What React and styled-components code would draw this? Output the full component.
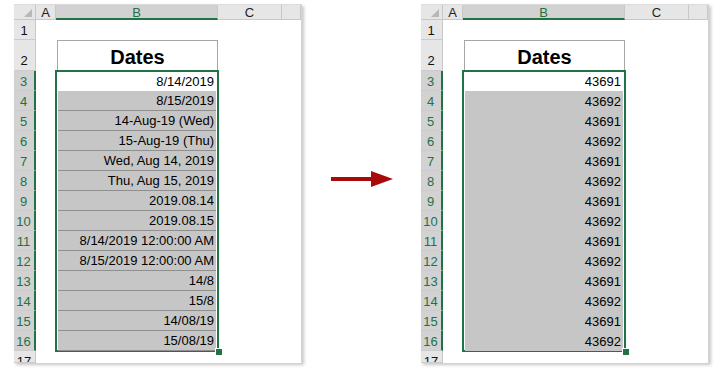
import React from "react";
import styled, { createGlobalStyle } from "styled-components";

const GlobalStyle = createGlobalStyle`
  html, body {
    margin: 0;
    background: #fff;
  }
  body {
    font-family: "Liberation Sans", Arial, sans-serif;
  }
`;

const GREEN = "#217346";

const before = [
  "8/14/2019",
  "8/15/2019",
  "14-Aug-19 (Wed)",
  "15-Aug-19 (Thu)",
  "Wed, Aug 14, 2019",
  "Thu, Aug 15, 2019",
  "2019.08.14",
  "2019.08.15",
  "8/14/2019 12:00:00 AM",
  "8/15/2019 12:00:00 AM",
  "14/8",
  "15/8",
  "14/08/19",
  "15/08/19",
];

const after = before.map((_, i) => (i % 2 === 0 ? "43691" : "43692"));

const Page = styled.div`
  display: flex;
  align-items: flex-start;
  padding: 4px 0 0 14px;
  height: 368px;
  box-sizing: border-box;
`;

const Sheet = styled.div`
  display: grid;
  grid-template-columns: 22px 20px 162px 64px 19px;
  grid-template-rows: 15px 20px 31px repeat(14, 20px) 12px;
  width: 287px;
  background: #fff;
  border-top: 1px solid #dcdcdc;
  border-right: 1px solid #d4d4d4;
  overflow: hidden;
  box-shadow: 2px 2px 3px rgba(0, 0, 0, 0.22);
  font-size: 13px;
  color: #000;
`;

const Corner = styled.div`
  grid-column: 1;
  grid-row: 1;
  position: relative;
  background: #e6e6e6;
  border-right: 1px solid #c8c8c8;
  border-bottom: 1px solid #c8c8c8;
  box-sizing: border-box;

  &::after {
    content: "";
    position: absolute;
    right: 3px;
    bottom: 2px;
    border-left: 8px solid transparent;
    border-bottom: 8px solid #b8b8b8;
  }
`;

const ColHead = styled.div`
  grid-row: 1;
  display: flex;
  align-items: center;
  justify-content: center;
  background: ${(p) => (p.$active ? "#d2d2d2" : "#e6e6e6")};
  color: ${(p) => (p.$active ? GREEN : "#222")};
  border-right: 1px solid #c8c8c8;
  border-bottom: ${(p) => (p.$active ? `2px solid ${GREEN}` : "1px solid #c8c8c8")};
  box-sizing: border-box;
  font-size: 13px;
  line-height: 1;
  padding-top: ${(p) => (p.$active ? "1px" : "0")};
`;

const RowHead = styled.div`
  grid-column: 1;
  display: flex;
  align-items: ${(p) => (p.$tall ? "flex-end" : "flex-start")};
  justify-content: center;
  padding: ${(p) => (p.$tall ? "0 1px 2px 0" : "3px 1px 0 0")};
  overflow: hidden;
  background: ${(p) => (p.$active ? "#d2d2d2" : "#e6e6e6")};
  color: ${(p) => (p.$active ? GREEN : "#111")};
  border-right: ${(p) => (p.$active ? `2px solid ${GREEN}` : "1px solid #c8c8c8")};
  border-bottom: 1px solid #cbcbcb;
  box-sizing: border-box;
  font-size: 13px;
  line-height: 15px;
`;

const Title = styled.div`
  grid-column: 3;
  grid-row: 3;
  margin-left: 1px;
  display: flex;
  align-items: flex-end;
  justify-content: center;
  border: 1px solid #a6a6a6;
  border-bottom: none;
  box-sizing: border-box;
  font-size: 20px;
  font-weight: bold;
  line-height: 24px;
  padding-bottom: 2px;
`;

const Selection = styled.div`
  grid-column: 3;
  grid-row: 4 / span 14;
  margin: -1px;
  position: relative;
  display: flex;
  flex-direction: column;
  border: 2px solid ${GREEN};
  padding: 0 1px 1px 1px;
  box-sizing: border-box;
  background: #fff;
`;

const Handle = styled.div`
  position: absolute;
  right: -5px;
  bottom: -5px;
  width: 6px;
  height: 6px;
  background: ${GREEN};
  border: 1px solid #fff;
  border-right: none;
  border-bottom: none;
`;

const Cell = styled.div`
  flex: 0 0 ${(p) => (p.$first ? "19px" : "20px")};
  display: flex;
  align-items: flex-end;
  justify-content: flex-end;
  padding: 0 2px 2px 0;
  box-sizing: border-box;
  background: ${(p) => (p.$first ? "#fff" : "#c6c6c6")};
  border-bottom: ${(p) => (p.$lined && !p.$first ? "1px solid #8f8f8f" : "none")};
  font-size: 13px;
  line-height: 15px;
  white-space: nowrap;

  &:last-of-type {
    flex-basis: 18px;
    border-bottom: none;
  }
`;

const ArrowBox = styled.div`
  width: 62px;
  margin: 165px 28px 0 29px;
  line-height: 0;
`;

function Spreadsheet({ values, lined }) {
  const rows = Array.from({ length: 17 }, (_, i) => i + 1);
  return (
    <Sheet>
      <Corner />
      <ColHead style={{ gridColumn: 2 }}>A</ColHead>
      <ColHead style={{ gridColumn: 3 }} $active>
        B
      </ColHead>
      <ColHead style={{ gridColumn: 4 }}>C</ColHead>
      <ColHead style={{ gridColumn: 5 }} />
      {rows.map((r) => (
        <RowHead
          key={r}
          style={{ gridRow: r + 1 }}
          $active={r >= 3 && r <= 16}
          $tall={r === 2}
        >
          {r}
        </RowHead>
      ))}
      <Title>Dates</Title>
      <Selection>
        {values.map((v, i) => (
          <Cell key={i} $first={i === 0} $lined={lined}>
            {v}
          </Cell>
        ))}
        <Handle />
      </Selection>
    </Sheet>
  );
}

function Arrow() {
  return (
    <svg width="62" height="20" viewBox="0 0 62 20">
      <rect x="0" y="8" width="42" height="4" fill="#a80a0a" />
      <polygon points="40,2 62,10 40,18" fill="#a80a0a" />
    </svg>
  );
}

export default function App() {
  return (
    <>
      <GlobalStyle />
      <Page>
        <Spreadsheet values={before} lined />
        <ArrowBox>
          <Arrow />
        </ArrowBox>
        <Spreadsheet values={after} />
      </Page>
    </>
  );
}
